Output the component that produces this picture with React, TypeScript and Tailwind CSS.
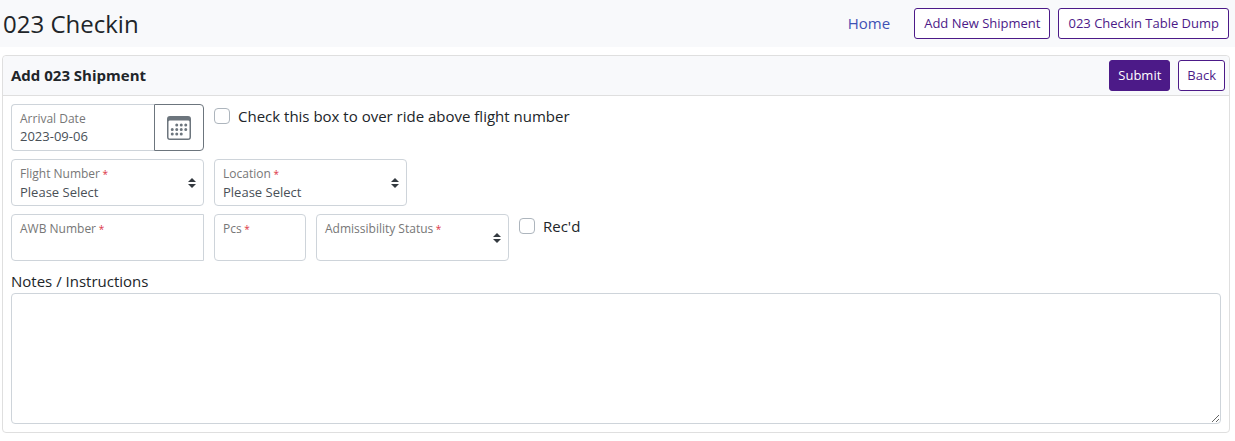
import React, { useId } from "react";
import { BsCalendar3 } from "react-icons/bs";

const control =
  "block h-[47px] w-full rounded border border-[#ced4da] bg-white px-2 text-[13px] text-[#495057] outline-none focus:border-[#4c1a88]";

function FloatingLabel({ id, text, required }: { id: string; text: string; required?: boolean }) {
  return (
    <label
      htmlFor={id}
      className="pointer-events-none absolute top-[7px] left-[9px] text-[12px] leading-4 whitespace-nowrap text-[#777]"
    >
      {text}
      {required && <span className="text-[10px] text-[#dc3545]"> *</span>}
    </label>
  );
}

function SelectField({ label, options }: { label: string; options: string[] }) {
  const id = useId();
  return (
    <div className="relative w-[193px]">
      <select id={id} className={`${control} appearance-none pt-5 pr-7`}>
        {options.map((option) => (
          <option key={option}>{option}</option>
        ))}
      </select>
      <FloatingLabel id={id} text={label} required />
      <svg
        viewBox="0 0 4 5"
        className="pointer-events-none absolute top-[19px] right-2 h-[10px] w-2 fill-[#343a40]"
        aria-hidden="true"
      >
        <path d="M2 0L0 2h4zm0 5L0 3h4z" />
      </svg>
    </div>
  );
}

function TextField({ label, width, corners = "" }: { label: string; width: string; corners?: string }) {
  const id = useId();
  return (
    <div className={`relative ${width}`}>
      <input id={id} type="text" className={`${control} pt-4 ${corners}`} />
      <FloatingLabel id={id} text={label} required />
    </div>
  );
}

function CheckField({ label }: { label: string }) {
  return (
    <label className="flex items-center gap-2 self-start text-[15px] leading-6 text-[#212529]">
      <input
        type="checkbox"
        className="size-4 shrink-0 appearance-none rounded border border-[#adb5bd] bg-white checked:border-[#4c1a88] checked:bg-[#4c1a88]"
      />
      {label}
    </label>
  );
}

function OutlineButton({ children, padding = "px-2" }: { children: React.ReactNode; padding?: string }) {
  return (
    <button
      type="button"
      className={`h-[31px] rounded-[3px] border border-[#4c1a88] bg-white text-[13px] whitespace-nowrap text-[#4c1a88] ${padding}`}
    >
      {children}
    </button>
  );
}

export default function App() {
  return (
    <div className="bg-white font-['Open_Sans','Noto_Sans',sans-serif] text-[#212529]">
      <header className="flex h-[47px] items-center justify-between bg-[#f8f9fb] pr-1.5 pl-[3px]">
        <h1 className="text-[24px] leading-8 font-medium">023 Checkin</h1>
        <nav className="flex items-center gap-2">
          <a href="#home" className="mr-4 text-[15px] text-[#3f51b5]">
            Home
          </a>
          <OutlineButton padding="px-[9px]">Add New Shipment</OutlineButton>
          <OutlineButton padding="px-[9px]">023 Checkin Table Dump</OutlineButton>
        </nav>
      </header>

      <main className="mt-2 mr-[5px] ml-0.5">
        <form className="rounded border border-[#dfdfdf]" onSubmit={(e) => e.preventDefault()}>
          <div className="flex h-10 items-center justify-between rounded-t border-b border-[#dfdfdf] bg-[#f8f9fb] pr-1 pl-2">
            <h2 className="text-[15px] font-bold">Add 023 Shipment</h2>
            <div className="flex gap-2">
              <button
                type="submit"
                className="h-[31px] rounded-[3px] border border-[#4c1a88] bg-[#4c1a88] px-2 text-[13px] font-medium text-white"
              >
                Submit
              </button>
              <OutlineButton>Back</OutlineButton>
            </div>
          </div>

          <div className="flex flex-col gap-2 p-2">
            <div className="flex flex-wrap gap-2.5">
              <div className="flex w-[193px]">
                <div className="relative min-w-0 flex-1">
                  <input
                    id="arrival-date"
                    type="text"
                    defaultValue="2023-09-06"
                    className={`${control} rounded-r-none border-r-0 pt-4`}
                  />
                  <FloatingLabel id="arrival-date" text="Arrival Date" />
                </div>
                <button
                  type="button"
                  aria-label="Choose date"
                  className="flex w-[50px] items-center justify-center rounded-r border border-[#6c757d] text-[#6c757d]"
                >
                  <BsCalendar3 className="size-6" />
                </button>
              </div>
              <CheckField label="Check this box to over ride above flight number" />
            </div>

            <div className="flex flex-wrap gap-2.5">
              <SelectField label="Flight Number" options={["Please Select"]} />
              <SelectField label="Location" options={["Please Select"]} />
            </div>

            <div className="flex flex-wrap gap-2.5">
              <TextField label="AWB Number" width="w-[193px]" corners="rounded-r-none" />
              <TextField label="Pcs" width="w-[92px]" />
              <SelectField label="Admissibility Status" options={[""]} />
              <CheckField label="Rec'd" />
            </div>

            <div>
              <label htmlFor="notes" className="block text-[15px] leading-6">
                Notes / Instructions
              </label>
              <textarea
                id="notes"
                className="block h-[131px] w-full resize rounded border border-[#ced4da] bg-white p-2 text-[15px] outline-none"
              />
            </div>
          </div>
        </form>
      </main>
    </div>
  );
}
